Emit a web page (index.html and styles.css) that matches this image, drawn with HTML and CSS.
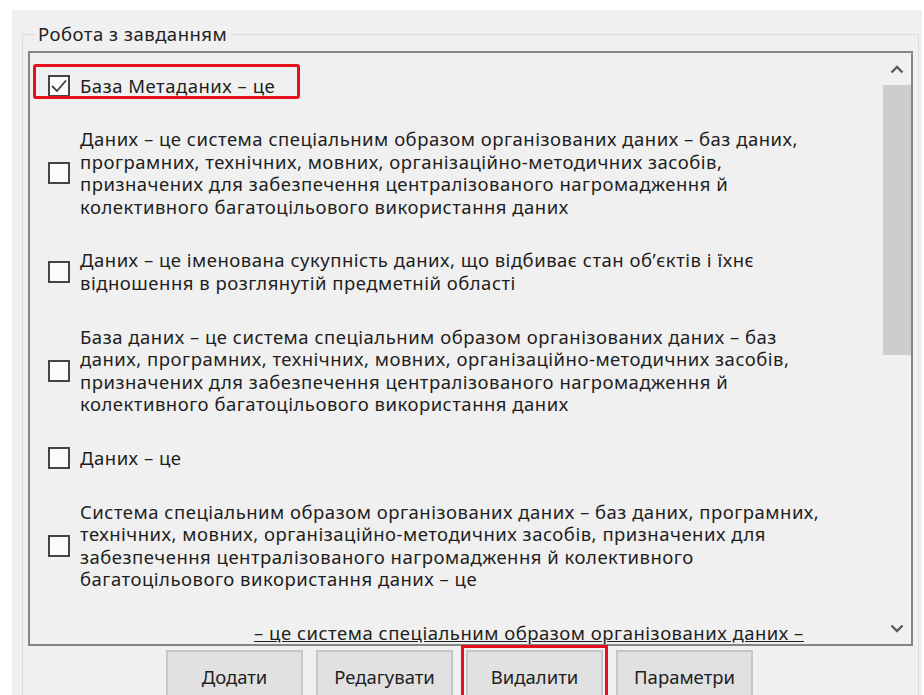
FILE: index.html
```html
<!DOCTYPE html>
<html lang="uk">
<head>
<meta charset="utf-8">
<title>Робота з завданням</title>
<link rel="stylesheet" href="styles.css">
</head>
<body>
<div class="window">
  <fieldset class="group">
    <legend class="group-title">Робота з завданням</legend>

    <div class="listbox">
      <div class="list-items">
        <div class="item">
          <span class="marked">
            <span class="check is-checked">
              <svg viewBox="0 0 18 18" width="18" height="18"><polyline points="2,9 7,14 16,3.5" fill="none" stroke="#404040" stroke-width="1.8"/></svg>
            </span>
            <span class="label">База Метаданих – це</span>
          </span>
        </div>

        <div class="item">
          <span class="check"></span>
          <span class="label">Даних – це система спеціальним образом організованих даних – баз даних,<br>програмних, технічних, мовних, організаційно-методичних засобів,<br>призначених для забезпечення централізованого нагромадження й<br>колективного багатоцільового використання даних</span>
        </div>

        <div class="item">
          <span class="check"></span>
          <span class="label">Даних – це іменована сукупність даних, що відбиває стан об’єктів і їхнє<br>відношення в розглянутій предметній області</span>
        </div>

        <div class="item">
          <span class="check"></span>
          <span class="label">База даних – це система спеціальним образом організованих даних – баз<br>даних, програмних, технічних, мовних, організаційно-методичних засобів,<br>призначених для забезпечення централізованого нагромадження й<br>колективного багатоцільового використання даних</span>
        </div>

        <div class="item">
          <span class="check"></span>
          <span class="label">Даних – це</span>
        </div>

        <div class="item">
          <span class="check"></span>
          <span class="label">Система спеціальним образом організованих даних – баз даних, програмних,<br>технічних, мовних, організаційно-методичних засобів, призначених для<br>забезпечення централізованого нагромадження й колективного<br>багатоцільового використання даних – це</span>
        </div>

        <!-- multi-line entry cut by the bottom edge: its box sits further down -->
        <div class="item item-cut">
          <span class="check"></span>
          <span class="label"><span class="blank"></span><span class="linked">– це система спеціальним образом організованих даних –</span></span>
        </div>
      </div>

      <div class="scrollbar">
        <div class="sb-arrow">
          <svg viewBox="0 0 14 9" width="14" height="9"><polyline points="1.5,7.5 7,2 12.5,7.5" fill="none" stroke="#5a5a5a" stroke-width="2.4"/></svg>
        </div>
        <div class="sb-track"><div class="sb-thumb"></div></div>
        <div class="sb-arrow">
          <svg viewBox="0 0 14 9" width="14" height="9"><polyline points="1.5,1.5 7,7 12.5,1.5" fill="none" stroke="#5a5a5a" stroke-width="2.4"/></svg>
        </div>
      </div>
    </div>

    <div class="buttons">
      <button class="btn" type="button">Додати</button>
      <button class="btn" type="button">Редагувати</button>
      <button class="btn btn-marked" type="button">Видалити</button>
      <button class="btn" type="button">Параметри</button>
    </div>
  </fieldset>
</div>
</body>
</html>
```

FILE: styles.css
```css
* {
  box-sizing: border-box;
}

html,
body {
  margin: 0;
  height: 100%;
}

body {
  background: #ffffff;
  overflow: hidden;
  font-family: "Noto Sans", "Open Sans", sans-serif;
  font-size: 18.5px;
  letter-spacing: 0.5px;
  color: #1e1e1e;
}

/* dialog surface */
.window {
  margin: 10px 2px 0 12px;
  height: calc(100% - 10px);
  padding: 13px 3px 0 10px;
  background: #f0f0f0;
}

/* group box */
.group {
  margin: 0;
  min-width: 0;
  height: 100%;
  padding: 6px 5px 0 5px;
  border: 1px solid #dcdcdc;
  border-bottom: none;
}

.group-title {
  margin-left: 7px;
  padding: 0 3px;
  line-height: 22px;
  color: #222;
}

/* checked list box */
.listbox {
  display: flex;
  height: 595px;
  border: 2px solid #858585;
  background: #f0f0f0;
}

.list-items {
  flex: 1;
  min-width: 0;
  overflow: hidden;
  padding: 6px 0 0 18px;
}

.item {
  display: flex;
  align-items: center;
  gap: 10px;
  padding: 15.5px 0;
  line-height: 22.6px;
}

.item-cut {
  align-items: flex-start;
}

.item-cut .check {
  margin-top: 34px;
}

.check {
  flex: none;
  display: flex;
  align-items: center;
  justify-content: center;
  width: 22px;
  height: 22px;
  border: 2px solid #444444;
  background: #fbfbfb;
}

.label {
  white-space: nowrap;
}

/* highlighted entry */
.marked {
  position: relative;
  display: inline-flex;
  align-items: center;
  gap: 10px;
}

.marked::after {
  content: "";
  position: absolute;
  inset: -11px -25px -2px -15px;
  border: 3px solid #e5101c;
  border-radius: 3px;
}

.blank {
  display: inline-block;
  width: 174px;
}

.linked {
  text-decoration: underline;
}

/* vertical scroll bar */
.scrollbar {
  flex: none;
  display: flex;
  flex-direction: column;
  width: 28px;
}

.sb-arrow {
  display: flex;
  align-items: center;
  justify-content: center;
  height: 32px;
}

.sb-track {
  flex: 1;
}

.sb-thumb {
  height: 270px;
  background: #cdcdcd;
}

/* command buttons */
.buttons {
  display: flex;
  gap: 13px;
  padding: 4px 0 0 138px;
}

.btn {
  width: 137px;
  height: 52px;
  padding: 0;
  border: 2px solid #c6c6c6;
  background: #e1e1e1;
  font: inherit;
  color: #1e1e1e;
}

.btn-marked {
  outline: 3px solid #e5101c;
  outline-offset: 2px;
}
```
